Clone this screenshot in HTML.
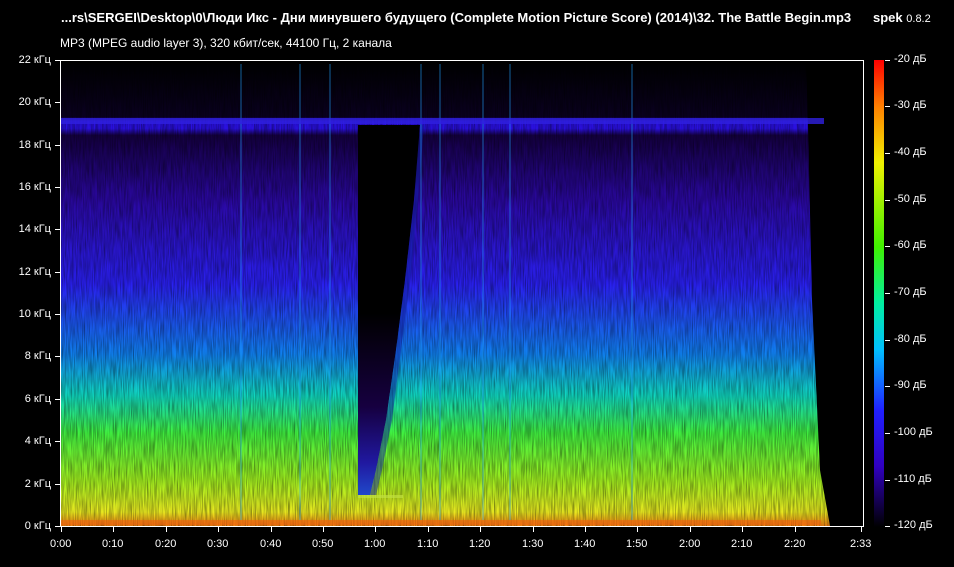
<!DOCTYPE html>
<html><head><meta charset="utf-8"><style>
html,body{margin:0;padding:0;background:#000;}
body{width:954px;height:567px;overflow:hidden;position:relative;font-family:"Liberation Sans","DejaVu Sans",sans-serif;color:#fff;}
.t{position:absolute;font-size:12px;white-space:nowrap;}
</style></head><body>
<svg width="954" height="567" style="position:absolute;left:0;top:0" xmlns="http://www.w3.org/2000/svg">
<defs>
<linearGradient id="sp" x1="0" y1="0" x2="0" y2="1">
<stop offset="0" stop-color="#000"/>
<stop offset="0.12" stop-color="#0a0020"/>
<stop offset="0.13" stop-color="#2a10e0"/>
<stop offset="0.145" stop-color="#2a10e0"/>
<stop offset="0.16" stop-color="#140040"/>
<stop offset="0.3" stop-color="#2a08a0"/>
<stop offset="0.48" stop-color="#2a20f0"/>
<stop offset="0.63" stop-color="#1080f0"/>
<stop offset="0.72" stop-color="#10d8c0"/>
<stop offset="0.8" stop-color="#40f040"/>
<stop offset="0.9" stop-color="#a0f020"/>
<stop offset="0.97" stop-color="#e8e820"/>
<stop offset="1" stop-color="#f08010"/>
</linearGradient>
<linearGradient id="cb" x1="0" y1="0" x2="0" y2="1">
<stop offset="0" stop-color="#ff0000"/>
<stop offset="0.1" stop-color="#ff8000"/>
<stop offset="0.22" stop-color="#f0f000"/>
<stop offset="0.4" stop-color="#40f000"/>
<stop offset="0.52" stop-color="#00f0a0"/>
<stop offset="0.62" stop-color="#00c0ff"/>
<stop offset="0.75" stop-color="#2020ff"/>
<stop offset="0.87" stop-color="#3000c0"/>
<stop offset="1" stop-color="#000"/>
</linearGradient>
<linearGradient id="gapfill" gradientUnits="userSpaceOnUse" x1="0" y1="127" x2="0" y2="500">
<stop offset="0" stop-color="#000"/>
<stop offset="0.5" stop-color="#000"/>
<stop offset="0.75" stop-color="#160040"/>
<stop offset="0.9" stop-color="#2018a0"/>
<stop offset="1" stop-color="#2050d0"/>
</linearGradient>
<filter id="nz" x="0" y="0" width="1" height="1">
<feTurbulence type="fractalNoise" baseFrequency="0.9 0.05" numOctaves="2" seed="3"/>
<feColorMatrix values="0 0 0 0 0  0 0 0 0 0  0 0 0 0 0  0 0 0 -1.6 1.1"/>
</filter>
</defs>
<rect x="61" y="61" width="770" height="465" fill="url(#sp)"/>
<rect x="61" y="61" width="770" height="465" filter="url(#nz)" opacity="0.5"/>
<polygon points="358,125 420,125 414,200 405,280 396,350 386,420 376,470 370,495 358,495" fill="url(#gapfill)"/>
<polygon points="420,125 424,125 418,200 410,280 401,350 392,420 382,470 376,495 370,495 376,470 386,420 396,350 405,280 414,200" fill="#1020a0" opacity="0.5"/>
<rect x="358" y="495" width="45" height="3" fill="#c0e040" opacity="0.7"/>
<polygon points="806,61 864,61 864,526 830,526 820,470 812,300 808,125" fill="#000"/>
<g stroke="#20a0ff" stroke-width="1" opacity="0.6">
<line x1="241" y1="64" x2="241" y2="520"/><line x1="300" y1="64" x2="300" y2="520"/>
<line x1="421" y1="64" x2="421" y2="520"/><line x1="483" y1="64" x2="483" y2="520"/>
<line x1="632" y1="64" x2="632" y2="520"/><line x1="510" y1="64" x2="510" y2="520"/>
<line x1="440" y1="64" x2="440" y2="520"/><line x1="330" y1="64" x2="330" y2="520"/>
</g>
<rect x="61" y="118" width="763" height="6" fill="#3020e0" opacity="0.8"/>
<rect x="61" y="520" width="760" height="5" fill="#f06010" opacity="0.6"/>
<g fill="none" stroke="#fff" stroke-width="1">
<rect x="60.5" y="60.5" width="803" height="466"/>
</g>
<g stroke="#fff">
<line x1="55" x2="60" y1="60.5" y2="60.5"/><line x1="55" x2="60" y1="102.5" y2="102.5"/><line x1="55" x2="60" y1="145.5" y2="145.5"/><line x1="55" x2="60" y1="187.5" y2="187.5"/><line x1="55" x2="60" y1="229.5" y2="229.5"/><line x1="55" x2="60" y1="272.5" y2="272.5"/><line x1="55" x2="60" y1="314.5" y2="314.5"/><line x1="55" x2="60" y1="356.5" y2="356.5"/><line x1="55" x2="60" y1="399.5" y2="399.5"/><line x1="55" x2="60" y1="441.5" y2="441.5"/><line x1="55" x2="60" y1="484.5" y2="484.5"/><line x1="55" x2="60" y1="526.5" y2="526.5"/>
<line y1="527" y2="532" x1="61.5" x2="61.5"/><line y1="527" y2="532" x1="113.5" x2="113.5"/><line y1="527" y2="532" x1="166.5" x2="166.5"/><line y1="527" y2="532" x1="218.5" x2="218.5"/><line y1="527" y2="532" x1="271.5" x2="271.5"/><line y1="527" y2="532" x1="323.5" x2="323.5"/><line y1="527" y2="532" x1="375.5" x2="375.5"/><line y1="527" y2="532" x1="428.5" x2="428.5"/><line y1="527" y2="532" x1="480.5" x2="480.5"/><line y1="527" y2="532" x1="533.5" x2="533.5"/><line y1="527" y2="532" x1="585.5" x2="585.5"/><line y1="527" y2="532" x1="637.5" x2="637.5"/><line y1="527" y2="532" x1="690.5" x2="690.5"/><line y1="527" y2="532" x1="742.5" x2="742.5"/><line y1="527" y2="532" x1="795.5" x2="795.5"/><line y1="527" y2="532" x1="861.5" x2="861.5"/>
<line x1="885" x2="890" y1="60.5" y2="60.5"/><line x1="885" x2="890" y1="106.5" y2="106.5"/><line x1="885" x2="890" y1="153.5" y2="153.5"/><line x1="885" x2="890" y1="200.5" y2="200.5"/><line x1="885" x2="890" y1="246.5" y2="246.5"/><line x1="885" x2="890" y1="293.5" y2="293.5"/><line x1="885" x2="890" y1="340.5" y2="340.5"/><line x1="885" x2="890" y1="386.5" y2="386.5"/><line x1="885" x2="890" y1="433.5" y2="433.5"/><line x1="885" x2="890" y1="480.5" y2="480.5"/><line x1="885" x2="890" y1="526.5" y2="526.5"/>
</g>
<rect x="874" y="60" width="10" height="467" fill="url(#cb)"/>
</svg>
<div class="t" style="left:61px;top:10px;font-weight:bold;font-size:13px">...rs\SERGEI\Desktop\0\Люди Икс - Дни минувшего будущего (Complete Motion Picture Score) (2014)\32. The Battle Begin.mp3</div>
<div class="t" style="left:873px;top:10px;font-size:13px"><b>spek</b> <span style="font-size:11px">0.8.2</span></div>
<div class="t" style="left:60px;top:36px">MP3 (MPEG audio layer 3), 320 кбит/сек, 44100 Гц, 2 канала</div>
<div style="position:absolute;left:0;top:0;width:51px;font-size:11px;text-align:right;line-height:14px">
<div style="position:absolute;right:0;top:53px">22&nbsp;кГц</div><div style="position:absolute;right:0;top:95px">20&nbsp;кГц</div><div style="position:absolute;right:0;top:138px">18&nbsp;кГц</div><div style="position:absolute;right:0;top:180px">16&nbsp;кГц</div><div style="position:absolute;right:0;top:222px">14&nbsp;кГц</div><div style="position:absolute;right:0;top:265px">12&nbsp;кГц</div><div style="position:absolute;right:0;top:307px">10&nbsp;кГц</div><div style="position:absolute;right:0;top:349px">8&nbsp;кГц</div><div style="position:absolute;right:0;top:392px">6&nbsp;кГц</div><div style="position:absolute;right:0;top:434px">4&nbsp;кГц</div><div style="position:absolute;right:0;top:477px">2&nbsp;кГц</div><div style="position:absolute;right:0;top:519px">0&nbsp;кГц</div>
</div>
<div>
<div class="t" style="font-size:11px;left:50px;top:538px">0:00</div><div class="t" style="font-size:11px;left:102px;top:538px">0:10</div><div class="t" style="font-size:11px;left:155px;top:538px">0:20</div><div class="t" style="font-size:11px;left:207px;top:538px">0:30</div><div class="t" style="font-size:11px;left:260px;top:538px">0:40</div><div class="t" style="font-size:11px;left:312px;top:538px">0:50</div><div class="t" style="font-size:11px;left:364px;top:538px">1:00</div><div class="t" style="font-size:11px;left:417px;top:538px">1:10</div><div class="t" style="font-size:11px;left:469px;top:538px">1:20</div><div class="t" style="font-size:11px;left:522px;top:538px">1:30</div><div class="t" style="font-size:11px;left:574px;top:538px">1:40</div><div class="t" style="font-size:11px;left:626px;top:538px">1:50</div><div class="t" style="font-size:11px;left:679px;top:538px">2:00</div><div class="t" style="font-size:11px;left:731px;top:538px">2:10</div><div class="t" style="font-size:11px;left:784px;top:538px">2:20</div><div class="t" style="font-size:11px;left:850px;top:538px">2:33</div>
</div>
<div>
<div class="t" style="font-size:11px;left:894px;top:53px">-20 дБ</div><div class="t" style="font-size:11px;left:894px;top:99px">-30 дБ</div><div class="t" style="font-size:11px;left:894px;top:146px">-40 дБ</div><div class="t" style="font-size:11px;left:894px;top:193px">-50 дБ</div><div class="t" style="font-size:11px;left:894px;top:239px">-60 дБ</div><div class="t" style="font-size:11px;left:894px;top:286px">-70 дБ</div><div class="t" style="font-size:11px;left:894px;top:333px">-80 дБ</div><div class="t" style="font-size:11px;left:894px;top:379px">-90 дБ</div><div class="t" style="font-size:11px;left:894px;top:426px">-100 дБ</div><div class="t" style="font-size:11px;left:894px;top:473px">-110 дБ</div><div class="t" style="font-size:11px;left:894px;top:519px">-120 дБ</div>
</div>
</body></html>
